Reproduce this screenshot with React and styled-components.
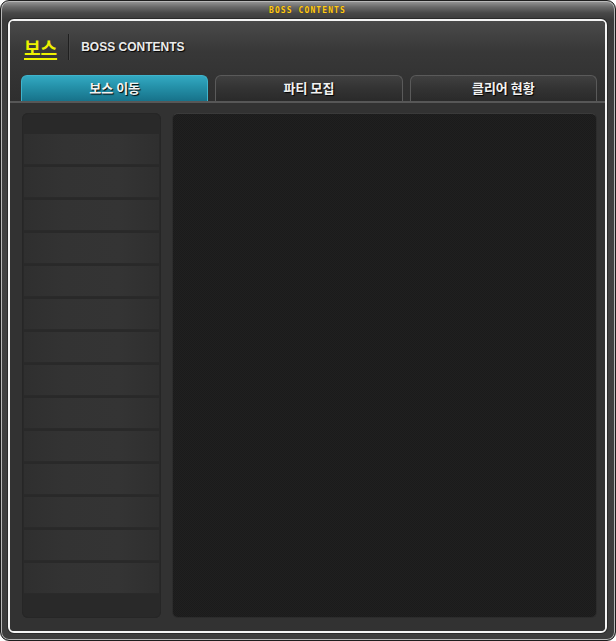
import React from "react";
import styled, { createGlobalStyle } from "styled-components";

// =================== Global ===================
const GlobalStyle = createGlobalStyle`
  html, body {
    margin: 0;
    padding: 0;
    background: #ffffff;
  }
  * {
    box-sizing: border-box;
  }
`;

// =================== Styled Components ===================
const Frame = styled.div`
  width: 616px;
  height: 641px;
  display: flex;
  flex-direction: column;
  border: 1px solid #1e1e1e;
  border-radius: 9px;
  box-shadow: inset 0 0 0 1px #b8b8b8;
  background: linear-gradient(
    180deg,
    #9a9a9a 0px,
    #6a6a6a 6px,
    #484848 12px,
    #3a3a3a 19px,
    #424242 40%,
    #3c3c3c 100%
  );
  padding: 0 8px 7px 7px;
`;

const TitleBar = styled.div`
  height: 18px;
  display: flex;
  align-items: center;
  justify-content: center;
  font-family: "DejaVu Sans Mono", "Liberation Mono", monospace;
  font-size: 8px;
  font-weight: bold;
  letter-spacing: 1.1px;
  color: #ffcc1a;
  text-shadow: 0 0 1px #5a3a00;
`;

const WhiteBorder = styled.div`
  flex: 1;
  display: flex;
  border: 2px solid #f4f4f4;
  border-radius: 6px;
  box-shadow: 0 0 0 1px #2a2a2a;
`;

const Panel = styled.div`
  flex: 1;
  display: flex;
  flex-direction: column;
  border-radius: 4px;
  background: #323232;
  overflow: hidden;
`;

const Header = styled.div`
  padding: 13px 8px 0 11px;
  height: 82px;
  display: flex;
  flex-direction: column;
  background: linear-gradient(180deg, #4a4a4a 0px, #383838 30px, #2e2e2e 82px);
  border-bottom: 2px solid #575757;
`;

const TitleRow = styled.div`
  display: flex;
  align-items: center;
  height: 26px;
  padding-left: 3px;
`;

const MainTitle = styled.span`
  font-family: "Noto Sans CJK KR", "Noto Sans", sans-serif;
  font-size: 18px;
  font-weight: bold;
  color: #eef200;
  text-decoration: underline;
  text-underline-offset: 3px;
  text-decoration-thickness: 2px;
  line-height: 1;
`;

const Divider = styled.span`
  width: 2px;
  height: 26px;
  margin: 0 11px 0 11px;
  border-left: 1px solid #1f1f1f;
  border-right: 1px solid #474747;
`;

const SubTitle = styled.span`
  font-family: "Liberation Sans", Arial, sans-serif;
  font-size: 12px;
  font-weight: bold;
  color: #ececec;
  text-shadow: 1px 1px 1px #000;
`;

const Tabs = styled.div`
  margin-top: 15px;
  display: flex;
  gap: 7px;
  height: 28px;
`;

const Tab = styled.div`
  flex: 1;
  display: flex;
  align-items: center;
  justify-content: center;
  padding-bottom: 2px;
  border-radius: 6px 6px 0 0;
  border: 1px solid ${(p) => (p.$active ? "#3fb4cc" : "#5a5a5a")};
  border-bottom: none;
  background: ${(p) =>
    p.$active
      ? "linear-gradient(180deg, #33a9c2 0%, #2490a8 45%, #17728a 100%)"
      : "linear-gradient(180deg, #404040 0%, #333333 50%, #2a2a2a 100%)"};
  font-family: "Noto Sans CJK KR", "Noto Sans", sans-serif;
  font-size: 13px;
  font-weight: bold;
  color: #f2f2f2;
  text-shadow: 1px 1px 1px #000;
`;

const Content = styled.div`
  flex: 1;
  display: grid;
  grid-template-columns: 139px 1fr;
  gap: 11px;
  padding: 10px 8px 13px 12px;
`;

const ListPanel = styled.div`
  border-radius: 6px;
  background: #292929;
  box-shadow: inset 0 0 0 1px #262626;
  padding: 21px 2px 0 2px;
  display: flex;
  flex-direction: column;
  gap: 2px;
`;

const ListItem = styled.div`
  height: 31px;
  background: linear-gradient(
    90deg,
    #2f2f2f 0%,
    #333333 30%,
    #343434 70%,
    #2f2f2f 100%
  );
  border-bottom: 1px solid #2a2a2a;
`;

const ViewPanel = styled.div`
  border-radius: 6px;
  border: 1px solid #2c2c2c;
  border-top-color: #3a3a3a;
  background: repeating-conic-gradient(#1b1b1b 0 25%, #202020 0 50%) 0 0 / 2px
    2px;
`;

// =================== Data ===================
const tabs = [
  { label: "보스 이동", active: true },
  { label: "파티 모집", active: false },
  { label: "클리어 현황", active: false },
];

const listCount = 14;

// ====================== Component ======================
const App = () => {
  return (
    <>
      <GlobalStyle />
      <Frame>
        <TitleBar>BOSS CONTENTS</TitleBar>
        <WhiteBorder>
          <Panel>
            <Header>
              <TitleRow>
                <MainTitle>보스</MainTitle>
                <Divider />
                <SubTitle>BOSS CONTENTS</SubTitle>
              </TitleRow>
              <Tabs>
                {tabs.map((tab) => (
                  <Tab key={tab.label} $active={tab.active}>
                    {tab.label}
                  </Tab>
                ))}
              </Tabs>
            </Header>
            <Content>
              <ListPanel>
                {Array.from({ length: listCount }).map((_, i) => (
                  <ListItem key={i} />
                ))}
              </ListPanel>
              <ViewPanel />
            </Content>
          </Panel>
        </WhiteBorder>
      </Frame>
    </>
  );
};

export default App;
